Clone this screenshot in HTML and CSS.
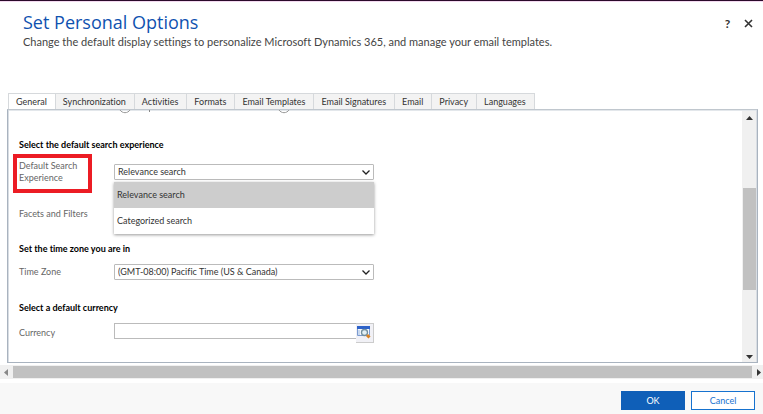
FILE: index.html
```html
<!DOCTYPE html>
<html lang="en">
<head>
<meta charset="utf-8">
<title>Set Personal Options</title>
<link rel="stylesheet" href="styles.css">
</head>
<body>
<div class="dialog">
  <header class="header">
    <div class="heading">
      <h1>Set Personal Options</h1>
      <p>Change the default display settings to personalize Microsoft Dynamics 365, and manage your email templates.</p>
    </div>
    <div class="actions">
      <button class="icon-button" type="button" aria-label="Help">?</button>
      <button class="icon-button" type="button" aria-label="Close">
        <svg width="9" height="9" viewBox="0 0 9 9"><path d="M1 1l7 7M8 1L1 8" fill="none" stroke="#333" stroke-width="1.6"/></svg>
      </button>
    </div>
  </header>

  <nav class="tabs">
    <a class="tab active" href="#general">General</a>
    <a class="tab" href="#synchronization">Synchronization</a>
    <a class="tab" href="#activities">Activities</a>
    <a class="tab" href="#formats">Formats</a>
    <a class="tab" href="#templates">Email Templates</a>
    <a class="tab" href="#signatures">Email Signatures</a>
    <a class="tab" href="#email">Email</a>
    <a class="tab" href="#privacy">Privacy</a>
    <a class="tab" href="#languages">Languages</a>
  </nav>

  <main class="panel" id="general">
    <form class="form">
      <svg class="cut-row" width="300" height="4" viewBox="0 0 300 4" aria-hidden="true">
        <path d="M101 0a6 6 0 0 0 10 0M260 0a6 6 0 0 0 10 0" fill="none" stroke="#999"/>
        <path d="M130.500 0v2" stroke="#888"/>
      </svg>
      <h2>Select the default search experience</h2>
      <div class="row search-row">
        <label class="marked" for="search">Default Search Experience</label>
        <div class="control">
          <select id="search"><option>Relevance search</option><option>Categorized search</option></select>
          <svg class="chevron" width="10" height="7" viewBox="0 0 10 7"><path d="M1.500 1.500l3.500 3.500 3.500-3.500" fill="none" stroke="#222" stroke-width="1.300"/></svg>
          <ul class="menu" role="listbox">
            <li class="selected" role="option" aria-selected="true">Relevance search</li>
            <li role="option" aria-selected="false">Categorized search</li>
          </ul>
        </div>
      </div>
      <div class="row facets-row"><span>Facets and Filters</span></div>
      <h2>Set the time zone you are in</h2>
      <div class="row zone-row">
        <label for="zone">Time Zone</label>
        <div class="control">
          <select id="zone"><option>(GMT-08:00) Pacific Time (US &amp; Canada)</option></select>
          <svg class="chevron" width="10" height="7" viewBox="0 0 10 7"><path d="M1.500 1.500l3.500 3.500 3.500-3.500" fill="none" stroke="#222" stroke-width="1.300"/></svg>
        </div>
      </div>
      <h2>Select a default currency</h2>
      <div class="row">
        <label class="currency-label" for="currency">Currency</label>
        <div class="lookup">
          <input id="currency" type="text">
          <button type="button" aria-label="Look up currency">
            <svg width="14" height="13" viewBox="0 0 14 13">
              <path d="M.5.5h12v9H.5z" fill="#f4f8fd" stroke="#7b9bd0"/>
              <path d="M0 0h13v3H0z" fill="#2d62c9"/>
              <path d="M2 4v5" stroke="#c9d9ef" stroke-width="2"/>
              <circle cx="7.500" cy="6.500" r="3" fill="#e2f0f4" stroke="#718f9e" stroke-width="1.300"/>
              <path d="M10 9l2.500 2.500" stroke="#d98222" stroke-width="3"/>
            </svg>
          </button>
        </div>
      </div>
    </form>
    <div class="scroll-y" aria-hidden="true">
      <svg width="7" height="4" viewBox="0 0 7 4"><path d="M0 4l3.500-4L7 4z" fill="#333"/></svg>
      <div class="track"><div class="thumb"></div></div>
      <svg width="7" height="4" viewBox="0 0 7 4"><path d="M0 0l3.500 4L7 0z" fill="#333"/></svg>
    </div>
  </main>

  <div class="scroll-x" aria-hidden="true">
    <svg width="4" height="7" viewBox="0 0 4 7"><path d="M4 0L0 3.500 4 7z" fill="#888"/></svg>
    <div class="thumb-x"></div>
    <svg width="4" height="7" viewBox="0 0 4 7"><path d="M0 0l4 3.500L0 7z" fill="#333"/></svg>
  </div>

  <footer class="footer">
    <button class="button primary" type="button">OK</button>
    <button class="button" type="button">Cancel</button>
  </footer>
</div>
</body>
</html>
```
FILE: styles.css
```css
* { box-sizing: border-box; }

body {
  margin: 0;
  background: #fff;
  color: #333;
  font: 9px/12px Lato, "Open Sans", sans-serif;
  font-variant-ligatures: none;
}

h1, h2, p, ul { margin: 0; padding: 0; }
svg { display: block; flex: none; }
button, input, select { font: inherit; color: inherit; }

.dialog {
  display: flex;
  flex-direction: column;
  min-height: 100vh;
  border-top: 1px solid #2b0a2b;
  box-shadow: inset 0 1px #f3d9f0;
}

.header {
  display: flex;
  justify-content: space-between;
  padding: 9px 6px 0 23px;
  height: 92px;
}

h1 {
  color: #0f52b0;
  font-family: "Open Sans", sans-serif;
  font-size: 18px;
  font-weight: 400;
  line-height: 24px;
}

.heading p {
  color: #444;
  font-size: 11px;
  line-height: 16px;
}

.actions { display: flex; gap: 4px; padding-top: 5px; }

.icon-button {
  display: flex;
  align-items: center;
  justify-content: center;
  width: 17px;
  height: 17px;
  padding: 0;
  border: 0;
  background: none;
  font-size: 12px;
  font-weight: 700;
}

.tabs { display: flex; padding-left: 8px; }

.tab {
  padding: 2px 8px 1px 7px;
  border: 1px solid #d6d9dc;
  border-width: 1px 1px 0 0;
  background: #f3f3f3;
  color: #333;
  text-decoration: none;
}

.tab.active { border-left-width: 1px; background: #fff; }

.panel {
  display: flex;
  margin: 0 5px 0 7px;
  border: 1px solid #a9b3bf;
  border-top-color: #c0c7ce;
  box-shadow: inset 1px 0 #d8dde3, inset -1px 0 #d8dde3, inset 0 1px #e3e7eb;
}

.form { flex: 1; padding: 0 11px 19px; }
.cut-row { margin-bottom: 25px; }

h2 {
  color: #000;
  font-size: 9px;
  font-weight: 700;
  line-height: 12px;
}

.row {
  display: grid;
  grid-template-columns: 95px 260px;
  align-items: start;
  color: #666;
}

.search-row { height: 45px; padding-top: 13px; }
.facets-row { height: 47px; padding-top: 12px; }
.zone-row { height: 47px; padding-top: 9px; }
.zone-row label { padding-top: 2px; }

.marked {
  width: 79px;
  height: 39px;
  margin: -10px 0 0 -6px;
  padding: 2px 2px 0;
  border: 4px solid #ec1c24;
}

.control { position: relative; color: #333; }

select {
  display: block;
  width: 100%;
  height: 16px;
  padding: 0 3px;
  border: 1px solid #bbb;
  border-radius: 1px;
  background: #fff;
  appearance: none;
}

.chevron { position: absolute; top: 5px; right: 3px; pointer-events: none; }

.menu {
  position: absolute;
  top: 18px;
  left: 0;
  width: 100%;
  background: #fff;
  box-shadow: 0 1px 3px #999;
  list-style: none;
}

.menu li { padding: 7px 3px; }
.menu .selected { background: #cdcdcd; }

.currency-label { padding-top: 13px; }
.lookup { display: flex; align-items: flex-start; padding-top: 9px; }

.lookup input {
  flex: 1;
  min-width: 0;
  height: 16px;
  padding: 0 3px;
  border: 1px solid #bbb;
  border-right: 0;
}

.lookup button {
  display: flex;
  width: 18px;
  height: 20px;
  padding: 2px 1px;
  border: 1px solid #ccc;
  border-left: 0;
  background: #f1f1f6;
}

.scroll-y {
  display: flex;
  flex-direction: column;
  align-items: center;
  width: 14px;
  margin: 1px 1px 0 0;
  padding: 5px 0 3px;
  background: #f0f0f0;
}

.track { display: flex; flex: 1; width: 100%; padding: 68px 0 65px; }
.thumb { width: 13px; margin-left: 1px; background: #c1c1c1; }

.scroll-x {
  display: flex;
  align-items: center;
  gap: 5px;
  height: 14px;
  margin-top: 2px;
  padding: 0 2px 0 4px;
  background: #f0f0f0;
}

.thumb-x { flex: 1; height: 12px; background: #c1c1c1; }

.footer {
  display: flex;
  flex: 1;
  justify-content: flex-end;
  align-items: flex-start;
  gap: 6px;
  margin-top: 4px;
  padding: 8px 8px 4px;
  background: #f8f8f8;
}

.button {
  width: 64px;
  height: 19px;
  padding: 0;
  border: 1px solid #1672cf;
  background: #fff;
  color: #1672cf;
}

.primary { border-color: #0f5fb8; background: #0f5fb8; color: #fff; }
```
